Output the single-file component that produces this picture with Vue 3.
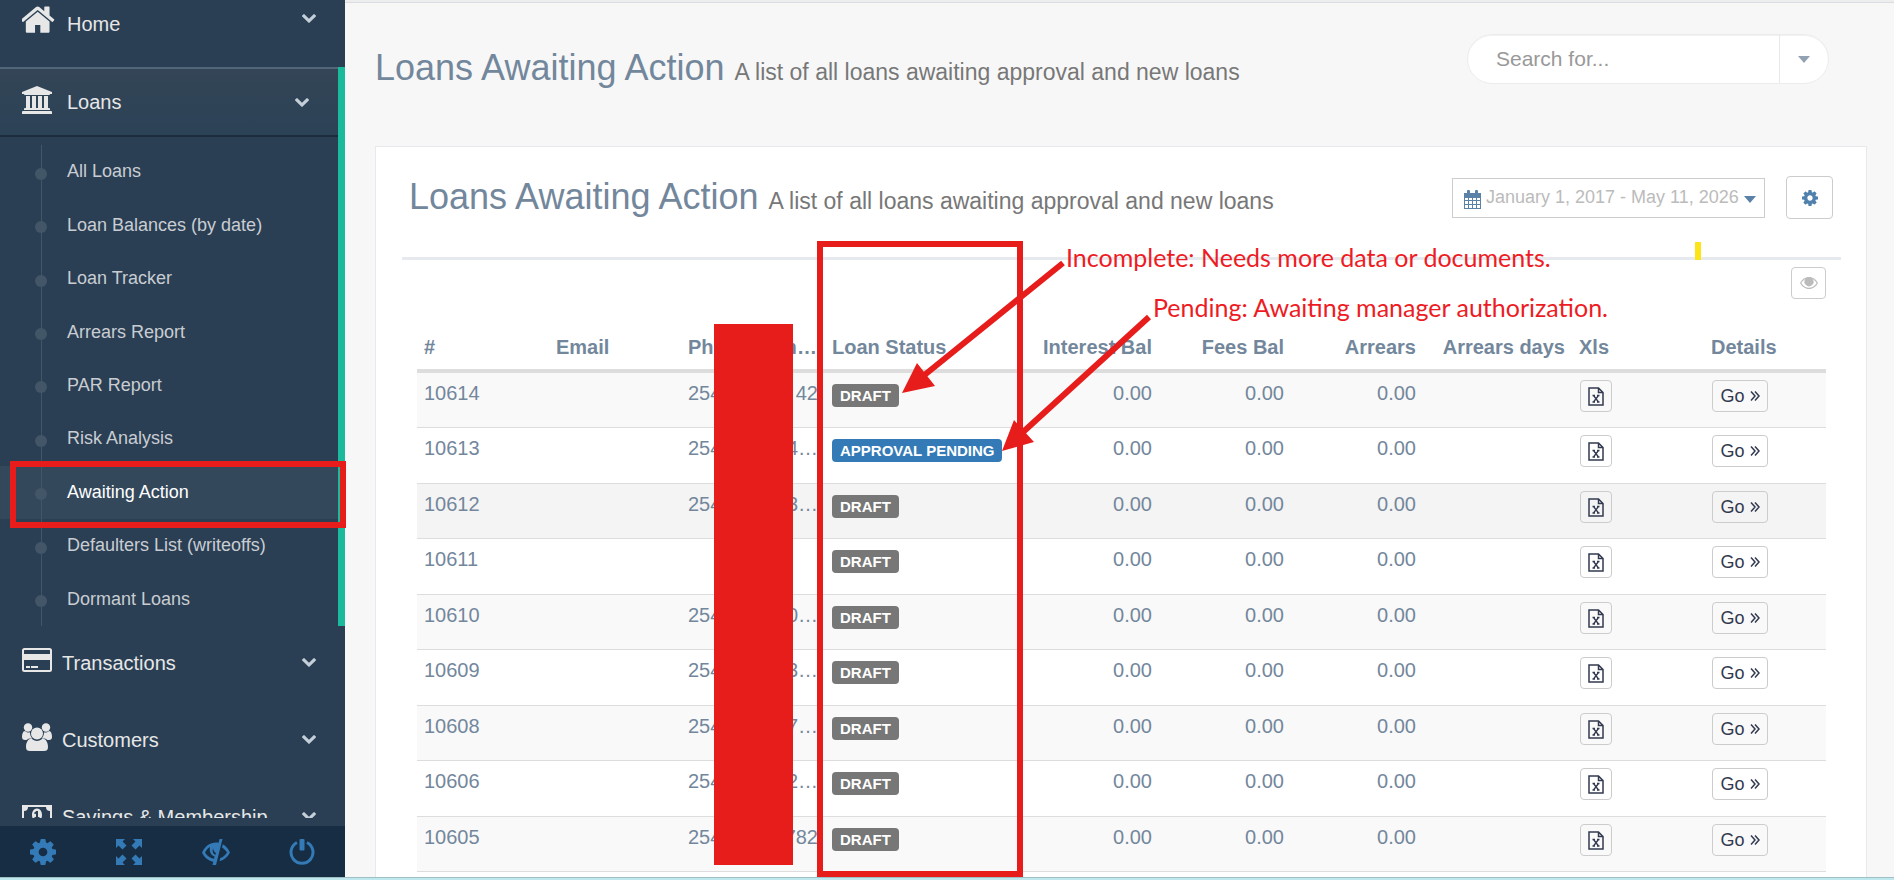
<template>
  <div class="page">
    <div class="body">
      <aside class="sidebar">
        <nav class="menu">
          <ul class="side-menu">
            <li v-for="item in menu" :key="item.label" :class="{ active: item.children }">
              <a href="#" class="menu-link" :class="{ wide: item.wide, raised: item.raised }">
                <svg v-if="item.icon === 'home'" class="menu-icon home" viewBox="70 190 1652 1346">
                  <path d="M1408 992v480q0 26-19 45t-45 19h-384v-384h-256v384h-384q-26 0-45-19t-19-45v-480q0-1 .5-3t.5-3l575-474 575 474q1 2 1 6zm223-69l-62 74q-8 9-21 11h-3q-13 0-21-7l-692-577-692 577q-12 8-24 7-13-2-21-11l-62-74q-8-10-7-23.5t11-21.5l719-599q32-26 76-26t76 26l244 204v-195q0-14 9-23t23-9h192q14 0 23 9t9 23v408l219 182q10 8 11 21.5t-7 23.5z" />
                </svg>
                <svg v-else-if="item.icon === 'bank'" class="menu-icon" viewBox="0 0 1920 1792">
                  <path d="M960 0l960 384v128h-128q0 26-20.5 45t-48.5 19h-1526q-28 0-48.5-19t-20.5-45h-128v-128zm-704 640h256v768h128v-768h256v768h128v-768h256v768h128v-768h256v768h59q28 0 48.5 19t20.5 45v64h-1664v-64q0-26 20.5-45t48.5-19h59v-768zm1595 960q28 0 48.5 19t20.5 45v128h-1920v-128q0-26 20.5-45t48.5-19h1782z" />
                </svg>
                <svg v-else-if="item.icon === 'card'" class="menu-icon" viewBox="0 0 30 28">
                  <path fill-rule="evenodd" d="M2.500 2h25A2.500 2.500 0 0 1 30 4.500v19a2.500 2.500 0 0 1-2.500 2.500h-25A2.500 2.500 0 0 1 0 23.500v-19A2.500 2.500 0 0 1 2.500 2zM2 4.500V8h26V4.500a.5.5 0 0 0-.5-.5h-25a.5.5 0 0 0-.5.5zM2 14v9.500a.5.5 0 0 0 .5.5h25a.5.5 0 0 0 .5-.5V14zM4 20h4v2H4zm5 0h7v2H9z" />
                </svg>
                <svg v-else-if="item.icon === 'users'" class="menu-icon" viewBox="0 0 30 28">
                  <circle cx="6" cy="4.500" r="4.200" />
                  <circle cx="24" cy="4.500" r="4.200" />
                  <path d="M3 8c2 1.800 4.500 1.600 5 1.200 0 3 1 4.800 2.300 6.300H7.500C6 15.500 5 17 4.500 17H3c-2 0-3-1-3-3 0-3 1-6 3-6zM27 8c-2 1.800-4.500 1.600-5 1.200 0 3-1 4.800-2.300 6.300h2.800c1.500 0 2.500 1.500 3 1.500H27c2 0 3-1 3-3 0-3-1-6-3-6z" />
                  <circle cx="15" cy="10.500" r="6" />
                  <path d="M9.500 15.500c3 3.200 8 3.200 11 0 3.500.2 5.500 4 5.500 8.500 0 3-1.500 4-4 4H8c-2.500 0-4-1-4-4 0-4.500 2-8.300 5.500-8.500z" />
                </svg>
                <svg v-else class="menu-icon" viewBox="0 0 30 28">
                  <path fill-rule="evenodd" d="M0 5h30v20H0zM6 7a4 4 0 0 1-4 4v8a4 4 0 0 1 4 4h18a4 4 0 0 1 4-4v-8a4 4 0 0 1-4-4z" />
                  <path fill-rule="evenodd" d="M15 8.500c3.300 0 5 3 5 6.500s-1.700 6.500-5 6.500-5-3-5-6.500 1.700-6.500 5-6.500zM14.300 11L12 13l1 1.200 1-.8V17h-1.500v1.500h5V17H16v-6z" />
                </svg>
                <span class="menu-label">{{ item.label }}</span>
                <svg class="chevron" viewBox="90 533 1612 1035">
                  <path d="M1683 808l-742 741q-19 19-45 19t-45-19l-742-741q-19-19-19-45.5t19-45.5l166-165q19-19 45-19t45 19l531 531 531-531q19-19 45-19t45 19l166 165q19 19 19 45.5t-19 45.5z" />
                </svg>
              </a>
              <ul v-if="item.children" class="child-menu">
                <li v-for="child in item.children" :key="child">
                  <a href="#" class="child-link" :class="{ current: child === current }">{{ child }}</a>
                </li>
              </ul>
            </li>
          </ul>
        </nav>

        <div class="sidebar-footer">
          <a href="#" aria-label="Settings">
            <svg viewBox="128 128 1536 1536"><path :d="cogPath" /></svg>
          </a>
          <a href="#" aria-label="FullScreen">
            <svg viewBox="0 0 26 26">
              <path d="M0 0h9L6.500 2.500l4 4-4 4-4-4L0 9zM26 0v9l-2.500-2.500-4 4-4-4 4-4L17 0zM0 26v-9l2.500 2.500 4-4 4 4-4 4L9 26zM26 26h-9l2.500-2.500-4-4 4-4 4 4L26 17z" />
            </svg>
          </a>
          <a href="#" aria-label="Lock">
            <svg class="eye-off" viewBox="0 0 28 26">
              <path fill-rule="evenodd" d="M17.500 0h3L14 26h-3.500l.8-3.200C6 21.800 2 18 0 13.500 3 7 8 3.500 14 3.500c1 0 1.800.1 2.600.3zM8 8c-2 1.200-3.800 3.300-5 5.500 1.800 3 5 5.500 9 6.300l.6-2.300C9 16.500 7 12.500 8 8zM11 9.500c-1 2.700.2 5.500 2.500 6.300l.4-1.800c-1.500-.8-2.400-2.500-2.900-4.500zM20.800 5.300C24 7 26.500 10 28 13.500c-2 4.300-5.800 7.500-10.500 8.800l.8-3.200c3-1 5.200-3.200 6.700-5.600-1.300-2-3-3.800-5-5z" />
            </svg>
          </a>
          <a href="#" aria-label="Logout">
            <svg viewBox="0 0 26 26">
              <path d="M8 3.500A11 11 0 1 0 18 3.500" class="ring" />
              <rect x="10.500" y="0" width="5" height="11.500" rx="1" />
            </svg>
          </a>
        </div>
      </aside>

      <main class="content">
        <div class="page-title">
          <h1>Loans Awaiting Action <small>A list of all loans awaiting approval and new loans</small></h1>
          <form class="search" @submit.prevent>
            <input v-model="query" type="text" placeholder="Search for..." aria-label="Search for">
            <button type="button" aria-label="Search options"><span class="caret"></span></button>
          </form>
        </div>

        <section class="panel">
          <header class="panel-title">
            <h2>Loans Awaiting Action <small>A list of all loans awaiting approval and new loans</small></h2>
            <button type="button" class="date-range">
              <svg class="calendar" viewBox="0 0 17 19">
                <path fill-rule="evenodd" d="M0 3h3V1q0-1 1-1h1q1 0 1 1v2h5V1q0-1 1-1h1q1 0 1 1v2h3v16H0zM1 8v2h3V8zm4 0v2h3V8zm4 0v2h3V8zm4 0v2h3V8zM1 11v3h3v-3zm4 0v3h3v-3zm4 0v3h3v-3zm4 0v3h3v-3zM1 15v3h3v-3zm4 0v3h3v-3zm4 0v3h3v-3zm4 0v3h3v-3z" />
              </svg>
              <span>January 1, 2017 - May 11, 2026</span>
              <span class="caret"></span>
            </button>
            <button type="button" class="btn gear" aria-label="Settings">
              <svg viewBox="128 128 1536 1536"><path :d="cogPath" /></svg>
            </button>
          </header>

          <div class="panel-content">
            <button type="button" class="btn eye" aria-label="Columns">
              <svg viewBox="0 0 18 12">
                <path fill-rule="evenodd" d="M9 0c4 0 7 2.500 9 6-2 3.500-5 6-9 6S2 9.500 0 6c2-3.500 5-6 9-6zM5.500 2C3.800 2.800 2.400 4.300 1.300 6c1.700 2.800 4.500 4.800 7.700 4.800s6-2 7.700-4.800c-1.100-1.700-2.500-3.200-4.200-4a4.500 4.500 0 1 1-7 0z" />
              </svg>
            </button>
            <table>
              <colgroup>
                <col v-for="(col, i) in columns" :key="i" :class="col.size">
              </colgroup>
              <thead>
                <tr>
                  <th v-for="col in columns" :key="col.label" :class="{ num: col.num }">{{ col.label }}</th>
                </tr>
              </thead>
              <tbody>
                <tr v-for="loan in loans" :key="loan.id" :class="{ hovered: loan.id === 10612 }">
                  <td>{{ loan.id }}</td>
                  <td></td>
                  <td>
                    <div v-if="loan.tail" class="phone"><span>254</span><span>{{ loan.tail }}</span></div>
                  </td>
                  <td>
                    <span class="label" :class="{ primary: loan.pending }">{{ loan.pending ? 'APPROVAL PENDING' : 'DRAFT' }}</span>
                  </td>
                  <td class="num">0.00</td>
                  <td class="num">0.00</td>
                  <td class="num">0.00</td>
                  <td></td>
                  <td>
                    <button type="button" class="btn xls" aria-label="Export to Excel">
                      <svg viewBox="0 0 16 19">
                        <path class="sheet" d="M1 1h9.500L15 5.500V18H1zM10.500 1v4.500H15" />
                        <path class="cross" d="M5.500 8.500l5 6.500M10.500 8.500l-5 6.500M4.500 8.500h2.500M9 8.500h2.500M4.500 15h2.500M9 15h2.500" />
                      </svg>
                    </button>
                  </td>
                  <td>
                    <a href="#" class="btn go">Go
                      <svg viewBox="0 0 10 10"><path d="M1 .5L5 5 1 9.500M5 .5L9 5 5 9.500" /></svg>
                    </a>
                  </td>
                </tr>
              </tbody>
            </table>
          </div>
        </section>
      </main>
    </div>
    <div class="bottom-edge"></div>

    <!-- annotations drawn over the page -->
    <div class="mark box-menu"></div>
    <div class="mark box-status"></div>
    <div class="mark redact"></div>
    <div class="mark highlight"></div>
    <svg class="mark arrows" width="1200" height="500">
      <path class="shaft" d="M1063 263L922 377M1149 317L1022 433" />
      <path d="M902 393L917 363L935 386zM1002 451L1014 420L1034 442z" />
    </svg>
    <p class="mark note incomplete">Incomplete: Needs more data or documents.</p>
    <p class="mark note pending">Pending: Awaiting manager authorization.</p>
  </div>
</template>

<script setup>
import { ref } from 'vue'

const query = ref('')
const current = ref('Awaiting Action')

const menu = [
  { label: 'Home', icon: 'home', wide: true, raised: true },
  {
    label: 'Loans',
    icon: 'bank',
    wide: true,
    children: [
      'All Loans',
      'Loan Balances (by date)',
      'Loan Tracker',
      'Arrears Report',
      'PAR Report',
      'Risk Analysis',
      'Awaiting Action',
      'Defaulters List (writeoffs)',
      'Dormant Loans',
    ],
  },
  { label: 'Transactions', icon: 'card' },
  { label: 'Customers', icon: 'users' },
  { label: 'Savings & Membership', icon: 'money' },
]

const columns = [
  { label: '#',            size: 'c-md' },
  { label: 'Email',        size: 'c-md' },
  { label: 'Phone num…',   size: 'c-phone' },
  { label: 'Loan Status',  size: 'c-status' },
  { label: 'Interest Bal', size: 'c-md', num: true },
  { label: 'Fees Bal',     size: 'c-md', num: true },
  { label: 'Arrears',      size: 'c-md', num: true },
  { label: 'Arrears days', size: 'c-days', num: true },
  { label: 'Xls',          size: 'c-md' },
  { label: 'Details',      size: 'c-rest' },
]

const loans = [
  { id: 10614, tail: '42' },
  { id: 10613, tail: '4…', pending: true },
  { id: 10612, tail: '3…' },
  { id: 10611, tail: '' },
  { id: 10610, tail: '0…' },
  { id: 10609, tail: '3…' },
  { id: 10608, tail: '7…' },
  { id: 10606, tail: '2…' },
  { id: 10605, tail: '782' },
]

const cogPath = 'M1152 896q0-106-75-181t-181-75-181 75-75 181 75 181 181 75 181-75 75-181zm512-109v222q0 12-8 23t-20 13l-185 28q-19 54-39 91 35 50 107 138 10 12 10 25t-9 23q-27 37-99 108t-94 71q-12 0-26-9l-138-108q-44 23-91 38-16 136-29 186-7 28-36 28h-222q-14 0-24.5-8.5t-11.5-21.5l-28-184q-49-16-90-37l-141 107q-10 9-25 9-14 0-25-11-126-114-165-168-7-10-7-23 0-12 8-23 15-21 51-66.5t54-70.5q-27-50-41-99l-183-27q-13-2-21-12.5t-8-23.5v-222q0-12 8-23t19-13l186-28q14-46 39-92-40-57-107-138-10-12-10-24 0-10 9-23 26-36 98.5-107.5t94.5-71.5q13 0 26 10l138 107q44-23 91-38 16-136 29-186 7-28 36-28h222q14 0 24.5 8.5t11.5 21.5l28 184q49 16 90 37l142-107q9-9 24-9 13 0 25 10 129 119 165 170 7 8 7 22 0 12-8 23-15 21-51 66.5t-54 70.5q26 50 41 98l183 28q13 2 21 12.5t8 23.5z'
</script>

<style>
body { margin: 0; background: #f7f7f7; }
</style>

<style scoped>
* { box-sizing: border-box; }
ul { list-style: none; margin: 0; padding: 0; }
a { text-decoration: none; }
button, input { font: inherit; color: inherit; }
svg { fill: currentColor; flex-shrink: 0; }

.page {
  position: relative;
  display: flex; flex-direction: column;
  height: 100vh; overflow: hidden;
  font-family: "Liberation Sans", Arial, sans-serif;
  font-size: 20px; line-height: 27px; color: #73879c;
}
.body { display: flex; flex: 1; min-height: 0; overflow: hidden; }
.bottom-edge {
  height: 3px; flex-shrink: 0;
  background: #bfe8ee; border-top: 1px solid #9fbfc4;
}

/* sidebar */
.sidebar {
  display: flex; flex-direction: column; gap: 8px;
  width: 345px; flex-shrink: 0; background: #2a3f54;
}
.menu { flex: 1; min-height: 0; overflow: hidden; }
.side-menu { margin-top: -10px; }
.menu-link {
  display: flex; align-items: center; gap: 10px;
  height: 77px; padding: 0 29px 4px 22px; color: #e7e7e7;
}
.menu-link.wide { gap: 15px; }
.menu-link.raised { gap: 11px; }
.menu-icon { width: 30px; height: 28px; margin-bottom: 5px; }
.menu-icon.home { width: 34px; margin-bottom: 16px; }
.menu-label { flex: 1; padding-top: 2px; white-space: nowrap; }
.wide .menu-label { padding-top: 0; }
.raised .menu-label { padding-bottom: 4px; }
.chevron { width: 14px; height: 9px; color: #c4cfda; }
.raised .chevron { margin-bottom: 16px; }
.active { border-right: 7px solid #1abb9c; }
.active .menu-link {
  height: 70px; margin-bottom: 8px; padding-bottom: 0;
  border-top: 2px solid #52667a; border-bottom: 2px solid #1d2c3c;
  background: linear-gradient(#334556, #2c4257);
}
.child-menu {
  position: relative; display: grid; grid-auto-rows: 1fr; height: 481px;
}
.child-menu::before {
  content: ''; position: absolute; left: 41px; top: 0; bottom: 0;
  width: 1px; background: #425668;
}
.child-link {
  display: flex; align-items: center; gap: 20px;
  height: 100%; padding-left: 35px;
  font-size: 18px; color: #c9cdd2;
}
.child-link::before {
  content: ''; width: 12px; height: 12px; margin-top: 4px;
  border-radius: 50%; background: #425668; position: relative;
}
.child-link.current { color: #fff; background: rgba(255, 255, 255, 0.05); }
.sidebar-footer { display: flex; height: 51px; background: #172d44; }
.sidebar-footer a {
  flex: 1; display: flex; align-items: center; justify-content: center;
  color: #337ab7;
}
.sidebar-footer svg { width: 26px; height: 26px; }
.sidebar-footer .eye-off { width: 28px; }
.ring { fill: none; stroke: currentColor; stroke-width: 3; }

/* content */
.content {
  flex: 1; min-width: 0; padding: 0 27px 0 30px;
  background: #f7f7f7;
}
.content::before {
  content: ''; display: block; height: 2px; margin: 0 -27px 0 -30px;
  background: #ededed; border-bottom: 1px solid #d9dee4;
}
.page-title {
  display: flex; justify-content: space-between; align-items: flex-start;
  height: 143px; padding: 31px 38px 0 0;
}
h1, h2 {
  margin: 0; font-size: 36px; line-height: 40px; font-weight: 400;
  white-space: nowrap;
}
h1 { padding-top: 14px; }
h2 { padding-top: 2px; }
small { font-size: 23px; color: #777; }
.search {
  display: flex; width: 362px; height: 50px; overflow: hidden;
  border: 1px solid #ececec; border-radius: 25px; background: #fff;
  box-shadow: inset 0 1px 0 rgba(0, 0, 0, 0.05);
}
.search input {
  flex: 1; min-width: 0; padding: 0 28px 2px; border: 0; outline: 0;
  background: none; font-size: 21px;
}
.search input::placeholder { color: #999; opacity: 1; }
.search button {
  display: flex; align-items: center; justify-content: center;
  width: 49px; padding: 0; border: 0; border-left: 1px solid #e8e8e8;
  background: none; color: #93a2b2;
}
.caret {
  width: 0; height: 0; border: 6px solid transparent;
  border-top: 7px solid currentColor; border-bottom: 0;
}

.panel {
  min-height: 100vh; padding: 0 25px 0 26px;
  background: #fff; border: 1px solid #e6e9ed;
}
.panel-title {
  display: flex; align-items: center;
  height: 113px; padding: 29px 8px 38px 7px;
  border-bottom: 3px solid #e6e9ed;
}
.panel-title h2 { flex: 1; }
.date-range {
  display: flex; align-items: center; gap: 5px;
  width: 313px; height: 40px; margin-right: 21px; padding: 0 12px 0 11px;
  border: 1px solid #ccc; background: #fff;
  font-size: 18px; color: #bbb; white-space: nowrap;
}
.date-range span:nth-child(2) { flex: 1; text-align: left; }
.date-range .caret { margin-top: 4px; color: #5a82a8; }
.calendar { width: 17px; height: 19px; margin-top: 4px; color: #5a82a8; }

.btn {
  display: flex; align-items: center; justify-content: center;
  height: 32px; padding: 0; border: 1px solid #ccc; border-radius: 4px;
  background: transparent;
}
.gear { width: 47px; height: 43px; color: #5080ac; }
.gear svg { width: 16px; height: 16px; }
.panel-content { padding: 7px 15px 0; }
.eye { width: 35px; margin-left: auto; color: #bbb; }
.eye svg { width: 18px; height: 12px; }

table {
  width: 100%; table-layout: fixed;
  border-collapse: separate; border-spacing: 0;
}
.c-md { width: 132px; }
.c-phone { width: 144px; }
.c-status { width: 202px; }
.c-days { width: 149px; }
th {
  height: 74px; padding: 0 7px 8px; border-bottom: 4px solid #ddd;
  text-align: left; vertical-align: bottom; white-space: nowrap;
}
td {
  height: 55px; padding: 7px 7px 0; border-bottom: 1px solid #ddd;
  vertical-align: top; white-space: nowrap;
}
tbody tr:nth-child(odd) { background: #f9f9f9; }
tbody tr:nth-child(even) td { height: 56px; }
tbody tr.hovered { background: #f4f4f4; }
.num { text-align: right; }
.phone { display: flex; justify-content: space-between; }
.label {
  display: block; width: fit-content; margin-top: 4px; padding: 0 8px;
  border-radius: 4px; background: #777; color: #fff;
  font-size: 15px; line-height: 23px; font-weight: 700;
}
.label.primary { background: #337ab7; }
.xls { width: 32px; margin-left: 1px; color: #333a50; }
.xls svg { width: 16px; height: 19px; }
.sheet, .cross { fill: none; stroke: currentColor; stroke-width: 2; }
.sheet { stroke-width: 1.500; }
.cross { stroke-width: 1.300; }
.go {
  gap: 5px; width: 56px; margin-left: 1px;
  font-size: 18px; color: #333a50;
}
.go svg { width: 10px; height: 10px; fill: none; stroke: currentColor; stroke-width: 1.500; }

/* annotations */
.mark { position: absolute; margin: 0; pointer-events: none; color: #e71d1c; }
.box-menu { left: 10px; top: 461px; width: 336px; height: 67px; border: 6px solid; }
.box-status { left: 817px; top: 241px; width: 206px; height: 636px; border: 6px solid; }
.redact { left: 714px; top: 324px; width: 79px; height: 541px; background: currentColor; }
.highlight { left: 1695px; top: 242px; width: 6px; height: 18px; background: #fbe516; }
.arrows { left: 0; top: 0; }
.shaft { fill: none; stroke: currentColor; stroke-width: 6; }
.note {
  font-family: Lato, "Open Sans", sans-serif; font-size: 25px;
  line-height: 30px; color: #ed1c24; white-space: nowrap;
}
.incomplete { left: 1066px; top: 242px; }
.pending { left: 1153px; top: 292px; }
</style>
